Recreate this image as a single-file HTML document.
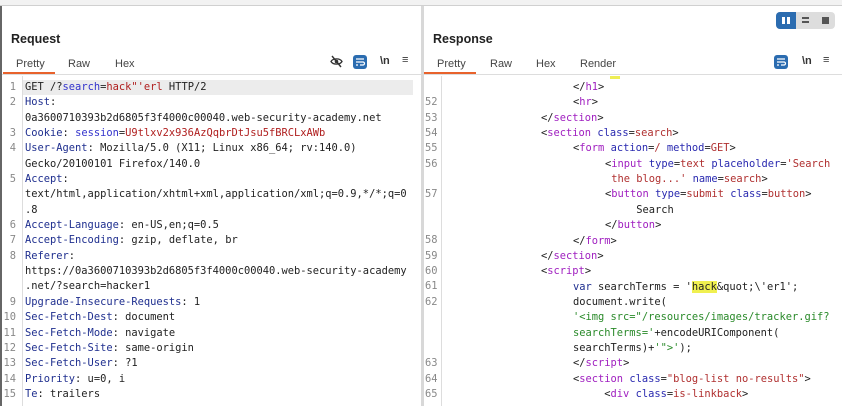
<!DOCTYPE html>
<html><head><meta charset="utf-8"><style>
*{margin:0;padding:0;box-sizing:border-box}
body{width:842px;height:406px;overflow:hidden;background:#fff;font-family:"Liberation Sans","DejaVu Sans",sans-serif;position:relative}
.top{position:absolute;left:0;top:0;width:842px;height:6px;background:#f2f2f2;border-bottom:1px solid #d0d0d0}
.div{position:absolute;left:421px;top:6px;width:3px;height:400px;background:#d8d8d8}
.lb{position:absolute;left:0;top:6px;width:2px;height:400px;background:#666}
.h{position:absolute;font-weight:bold;font-size:12.5px;color:#222}
.tab{position:absolute;font-size:11px;color:#444;top:58px}
.ul{position:absolute;top:72px;height:2px;background:#e8622c}
.tl{position:absolute;top:74px;height:1px;background:#ddd}
.code{position:absolute;font-family:"DejaVu Sans Mono","Liberation Mono",monospace;font-size:10.4px;color:#222;white-space:pre;line-height:15.35px}
.n{position:absolute;font-family:"DejaVu Sans Mono",monospace;font-size:10.4px;color:#888;line-height:15.35px;text-align:right;width:14px}
.g{position:absolute;top:76px;width:1px;height:330px;background:#ddd}
.k{color:#1f2f8f}.v{color:#b02020}.p{color:#3333cc}.t{color:#a020c0}.a{color:#2a2ab0}.s{color:#b03030}.gr{color:#2a8a2a}
.ic{position:absolute;font-size:11px;color:#333}
.bb{position:absolute;width:14px;height:14px;border-radius:3px;background:#2b6cb0}
</style></head><body>
<div class="top"></div>
<div class="lb"></div>
<div class="div"></div>

<div class="h" style="left:11px;top:32px">Request</div>
<div class="h" style="left:433px;top:32px">Response</div>

<div class="tab" style="left:16px">Pretty</div>
<div class="tab" style="left:68px">Raw</div>
<div class="tab" style="left:115px">Hex</div>
<div class="ul" style="left:3px;width:52px"></div>
<div class="tl" style="left:2px;width:419px"></div>

<div class="tab" style="left:437px">Pretty</div>
<div class="tab" style="left:490px">Raw</div>
<div class="tab" style="left:536px">Hex</div>
<div class="tab" style="left:580px">Render</div>
<div class="ul" style="left:424px;width:52px"></div>
<div class="tl" style="left:424px;width:418px"></div>

<!-- toggle -->
<div style="position:absolute;left:776px;top:12px;width:59px;height:17px;border-radius:4px;background:#ddd"></div>
<div style="position:absolute;left:776px;top:12px;width:20px;height:17px;border-radius:4px 0 0 4px;background:#2b6cb0"></div>
<div style="position:absolute;left:782px;top:17px;width:3px;height:7px;background:#fff"></div>
<div style="position:absolute;left:787px;top:17px;width:3px;height:7px;background:#fff"></div>
<div style="position:absolute;left:802px;top:17px;width:7px;height:2px;background:#555;box-shadow:0 4px 0 #555"></div>
<div style="position:absolute;left:822px;top:17px;width:7px;height:7px;background:#555"></div>

<!-- req icons -->
<svg style="position:absolute;left:330px;top:55px" width="13" height="13" viewBox="0 0 13 13"><path d="M1 6.5C3 3 10 3 12 6.5C10 10 3 10 1 6.5Z" fill="none" stroke="#333" stroke-width="1.3"/><circle cx="6.5" cy="6.5" r="1.8" fill="#333"/><path d="M2 1L11 12" stroke="#333" stroke-width="1.4"/></svg>
<div class="bb" style="left:353px;top:55px"></div>
<svg style="position:absolute;left:353px;top:55px" width="14" height="14"><path d="M3 4H11M3 7H10A1.5 1.5 0 0 1 10 10H7M3 10H5" stroke="#fff" stroke-width="1.2" fill="none"/></svg>
<div class="ic" style="left:380px;top:55px;font-weight:bold">\n</div>
<div class="ic" style="left:402px;top:54px">≡</div>
<div class="bb" style="left:774px;top:55px"></div>
<svg style="position:absolute;left:774px;top:55px" width="14" height="14"><path d="M3 4H11M3 7H10A1.5 1.5 0 0 1 10 10H7M3 10H5" stroke="#fff" stroke-width="1.2" fill="none"/></svg>
<div class="ic" style="left:802px;top:55px;font-weight:bold">\n</div>
<div class="ic" style="left:823px;top:54px">≡</div>

<!-- request code -->
<div style="position:absolute;left:23px;top:80px;width:390px;height:15px;background:#ececec"></div>
<div class="g" style="left:22px"></div>
<div class="n" style="left:2px;top:80px">1<br>2<br><br>3<br>4<br><br>5<br><br><br>6<br>7<br>8<br><br><br>9<br></div>
<div class="n" style="left:-4px;top:310.25px;width:20px">10<br>11<br>12<br>13<br>14<br>15</div>
<div class="code" style="left:25px;top:80px">GET /?<span class="p">search</span>=<span class="v">hack"'erl</span> HTTP/2
<span class="k">Host</span>:
0a3600710393b2d6805f3f4000c00040.web-security-academy.net
<span class="k">Cookie</span>: <span class="p">session</span>=<span class="v">U9tlxv2x936AzQqbrDtJsu5fBRCLxAWb</span>
<span class="k">User-Agent</span>: Mozilla/5.0 (X11; Linux x86_64; rv:140.0)
Gecko/20100101 Firefox/140.0
<span class="k">Accept</span>:
text/html,application/xhtml+xml,application/xml;q=0.9,*/*;q=0
.8
<span class="k">Accept-Language</span>: en-US,en;q=0.5
<span class="k">Accept-Encoding</span>: gzip, deflate, br
<span class="k">Referer</span>:
https://0a3600710393b2d6805f3f4000c00040.web-security-academy
.net/?search=hacker1
<span class="k">Upgrade-Insecure-Requests</span>: 1
<span class="k">Sec-Fetch-Dest</span>: document
<span class="k">Sec-Fetch-Mode</span>: navigate
<span class="k">Sec-Fetch-Site</span>: same-origin
<span class="k">Sec-Fetch-User</span>: ?1
<span class="k">Priority</span>: u=0, i
<span class="k">Te</span>: trailers</div>

<!-- response code -->
<div style="position:absolute;left:610px;top:76px;width:10px;height:3px;background:#eeee55"></div>
<div class="g" style="left:441px"></div>
<div class="n" style="left:425px;top:95.35px;width:20px;text-align:left">52<br>53<br>54<br>55<br>56<br><br>57<br><br><br>58<br>59<br>60<br>61<br>62<br><br><br><br>63<br>64<br>65</div>
<div class="code" style="left:573px;top:80px">&lt;/<span class="t">h1</span>&gt;
&lt;<span class="t">hr</span>&gt;</div>
<div class="code" style="left:541px;top:110.7px">&lt;/<span class="t">section</span>&gt;
&lt;<span class="t">section</span> <span class="a">class</span>=<span class="s">search</span>&gt;</div>
<div class="code" style="left:573px;top:141.4px">&lt;<span class="t">form</span> <span class="a">action</span>=<span class="s">/</span> <span class="a">method</span>=<span class="s">GET</span>&gt;</div>
<div class="code" style="left:605px;top:156.75px">&lt;<span class="t">input</span> <span class="a">type</span>=<span class="s">text</span> <span class="a">placeholder</span>=<span class="s">'Search</span>
<span class="s"> the blog...'</span> <span class="a">name</span>=<span class="s">search</span>&gt;
&lt;<span class="t">button</span> <span class="a">type</span>=<span class="s">submit</span> <span class="a">class</span>=<span class="s">button</span>&gt;
     Search
&lt;/<span class="t">button</span>&gt;</div>
<div class="code" style="left:573px;top:233.5px">&lt;/<span class="t">form</span>&gt;</div>
<div class="code" style="left:541px;top:248.85px">&lt;/<span class="t">section</span>&gt;
&lt;<span class="t">script</span>&gt;</div>
<div class="code" style="left:573px;top:279.55px"><span class="k">var</span> searchTerms = '<span style="background:#f0f050">hack</span>&amp;quot;\'er1';
document.write(
<span class="gr">'&lt;img src="/resources/images/tracker.gif?</span>
<span class="gr">searchTerms='</span>+encodeURIComponent(
searchTerms)+<span class="gr">'"&gt;'</span>);
&lt;/<span class="t">script</span>&gt;
&lt;<span class="t">section</span> <span class="a">class</span>=<span class="s">"blog-list no-results"</span>&gt;
     &lt;<span class="t">div</span> <span class="a">class</span>=<span class="s">is-linkback</span>&gt;</div>
</body></html>
